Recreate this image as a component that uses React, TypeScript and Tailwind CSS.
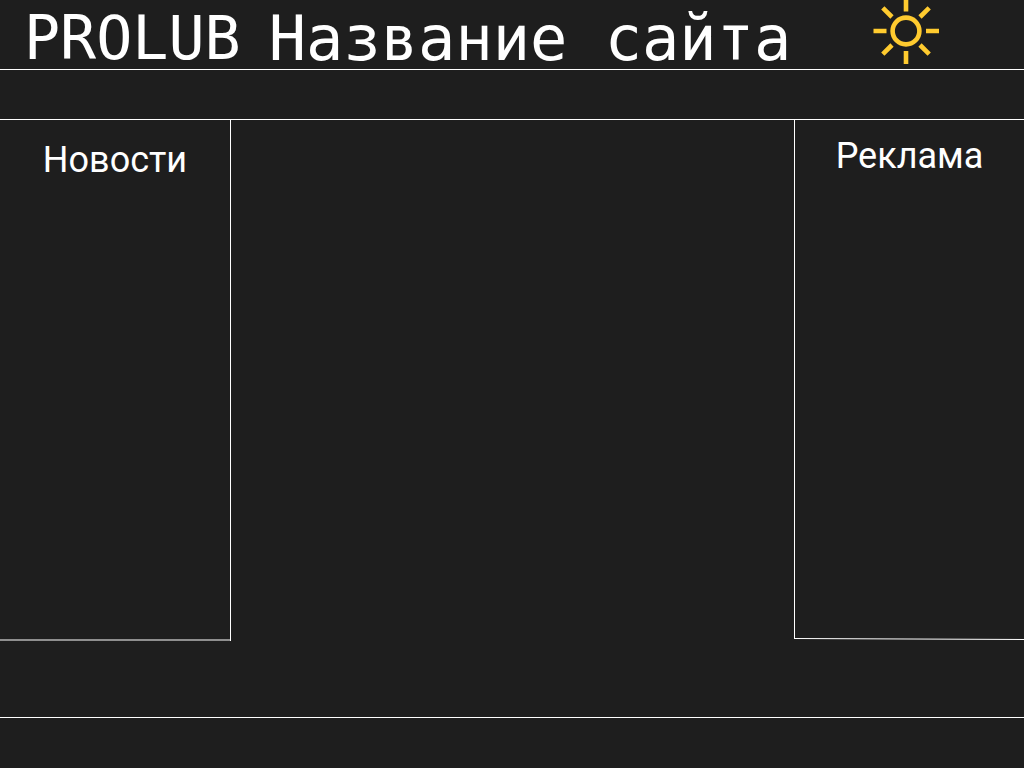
const lines = "border-white";

function SunIcon() {
  return (
    <svg viewBox="0 0 66 66" className="size-[66px]" fill="none" stroke="#ffcb2f" strokeWidth="4.6" aria-hidden="true">
      <circle cx="33" cy="33" r="13.4" />
      <path d="M33 0.5V13.5M33 53V66M0.5 33H13.5M53 33H66M9.8 9.8L19 19M47 47L56.2 56.2M9.8 56.2L19 47M47 19L56.2 9.8" />
    </svg>
  );
}

export default function App() {
  return (
    <div className="flex min-h-screen flex-col bg-[#1e1e1e] font-['Roboto',sans-serif] text-white">
      <header className={`flex h-[70px] border-b pl-6 ${lines}`}>
        <a href="#" className="pt-1.5 font-['DejaVu_Sans_Mono',monospace] text-[60px] leading-[64px] whitespace-nowrap">
          PROLUB
        </a>
        <h1 className="ml-7 pt-1.5 font-['DejaVu_Sans_Mono',monospace] text-[62px] leading-[66px] font-normal whitespace-nowrap">
          Название сайта
        </h1>
        <button type="button" aria-label="Светлая тема" className="-mt-0.5 mr-[85px] ml-auto size-[66px] shrink-0">
          <SunIcon />
        </button>
      </header>
      <nav className={`h-[50px] border-b ${lines}`} />
      <div className="flex flex-1 justify-between pb-[76px]">
        <aside className={`flex w-[231px] flex-col border-r ${lines}`}>
          <h2 className="flex-1 pt-5 text-center text-4xl font-normal">Новости</h2>
          <div className="h-0.5 bg-[#8f8f8f]" />
        </aside>
        <main className="flex-1" />
        <aside className={`mb-0.5 flex w-[230px] flex-col border-l ${lines}`}>
          <h2 className="flex-1 pt-4 text-center text-4xl font-normal">Реклама</h2>
          <svg viewBox="0 0 230 2" preserveAspectRatio="none" className="-mb-px h-0.5 w-full" aria-hidden="true">
            <path d="M0 0.5L230 1.5" stroke="white" />
          </svg>
        </aside>
      </div>
      <footer className={`h-[51px] border-t ${lines}`} />
    </div>
  );
}
